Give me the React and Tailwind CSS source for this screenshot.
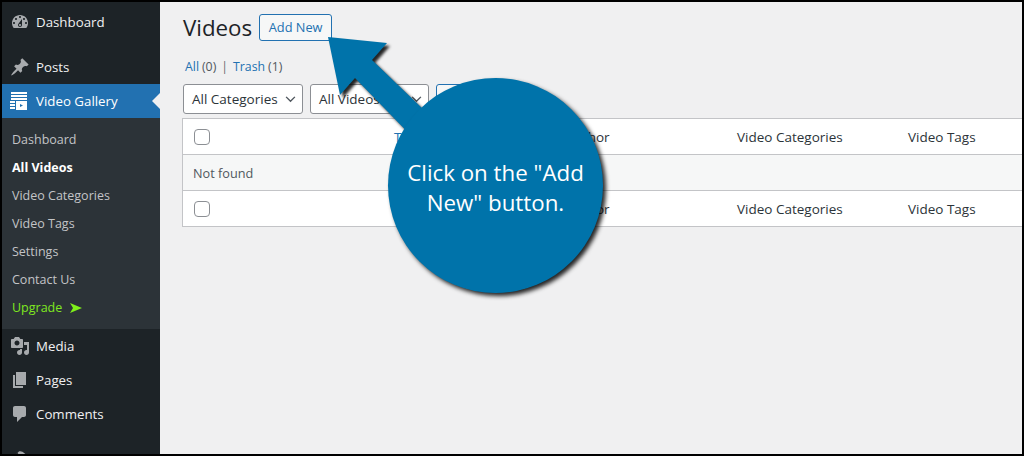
const FONT = "font-['Open_Sans','Noto_Sans',sans-serif]";

const paths = {
  dashboard: "M3.76 16h12.48c1.1-1.37 1.76-3.11 1.76-5 0-4.42-3.58-8-8-8s-8 3.58-8 8c0 1.89.66 3.63 1.76 5zM10 4c.55 0 1 .45 1 1s-.45 1-1 1-1-.45-1-1 .45-1 1-1zM6 6c.55 0 1 .45 1 1s-.45 1-1 1-1-.45-1-1 .45-1 1-1zm8 0c.55 0 1 .45 1 1s-.45 1-1 1-1-.45-1-1 .45-1 1-1zm-5.37 5.55L12 7v6c0 1.1-.9 2-2 2s-2-.9-2-2c0-.57.24-1.08.63-1.45zM4 10c.55 0 1 .45 1 1s-.45 1-1 1-1-.45-1-1 .45-1 1-1zm12 0c.55 0 1 .45 1 1s-.45 1-1 1-1-.45-1-1 .45-1 1-1zm-5 3c0-.55-.45-1-1-1s-1 .45-1 1 .45 1 1 1 1-.45 1-1z",
  pin: "M10.44 3.02l1.82-1.82 6.36 6.35-1.83 1.82c-1.05-.68-2.48-.57-3.41.36l-.75.75c-.92.93-1.04 2.35-.35 3.41l-1.83 1.82-2.41-2.41-2.8 2.79c-.42.42-3.38 2.71-3.8 2.29s1.86-3.39 2.28-3.81l2.79-2.79L4.1 9.36l1.83-1.82c1.05.69 2.48.57 3.4-.36l.75-.75c.93-.92 1.05-2.35.36-3.41z",
  media: "M13 11V4c0-.55-.45-1-1-1h-1.67L9 1H5L3.67 3H2c-.55 0-1 .45-1 1v7c0 .55.45 1 1 1h10c.55 0 1-.45 1-1zM7 4.5c1.38 0 2.5 1.12 2.5 2.5S8.38 9.5 7 9.5 4.5 8.38 4.5 7 5.62 4.5 7 4.5zM14 6h5v10.5c0 1.38-1.12 2.5-2.5 2.5S14 17.88 14 16.5s1.12-2.5 2.5-2.5c.17 0 .34.02.5.05V9h-3V6zm-4 8.05V13h2v3.5c0 1.38-1.12 2.5-2.5 2.5S7 17.88 7 16.5 8.12 14 9.5 14c.17 0 .34.02.5.05z",
  pages: "M6 15V2h10v13H6zm-1 1h8v2H3V5h2v11z",
  comments: "M5 2h9c1.1 0 2 .9 2 2v7c0 1.1-.9 2-2 2h-2l-5 5v-5H5c-1.1 0-2-.9-2-2V4c0-1.1.9-2 2-2z",
  appearance: "M14.48 11.06L7.41 3.99l1.5-1.5c.5-.56 2.3-.47 3.51.32 1.21.8 1.43 1.28 2.91 2.1 1.18.64 2.45 1.26 4.45.85zm-.71.71L6.7 4.7 4.93 6.47c-.39.39-.39 1.02 0 1.41l1.06 1.06c.39.39.39 1.03 0 1.42-.6.6-1.43 1.11-2.21 1.69-.35.26-.7.53-1.01.84C1.43 13.23.78 15.6 2.09 16.9c1.31 1.31 3.68.65 5.03-.69.31-.31.58-.66.84-1.01.58-.78 1.09-1.61 1.69-2.21.39-.39 1.03-.39 1.42 0l1.06 1.06c.39.39 1.02.39 1.41 0z",
};

function DashIcon({ name, className = "" }) {
  return (
    <svg viewBox="0 0 20 20" className={`h-5 w-5 shrink-0 fill-[#a7aaad] ${className}`}>
      <path d={paths[name]} />
    </svg>
  );
}

function GalleryIcon() {
  return (
    <svg viewBox="0 0 18 18" className="h-[18px] w-[18px] shrink-0 fill-white">
      <rect x="1" y="0" width="16" height="2" />
      <rect x="1" y="3" width="16" height="2" />
      <rect x="1" y="6" width="16" height="2" />
      <rect x="0" y="9" width="5" height="2" />
      <rect x="0" y="12" width="5" height="2" />
      <rect x="0" y="15" width="5" height="2" />
      <path fillRule="evenodd" d="M6 9h11v9H6zM10 12v3l3-1.500z" />
    </svg>
  );
}

function MenuRow({ icon, label, className = "" }) {
  return (
    <div className={`flex h-[34px] shrink-0 items-center text-[13.3px] text-[#f0f0f1] ${className}`}>
      <div className="flex w-[34px] shrink-0 justify-center pl-[2px]">{icon}</div>
      <span className="pt-[2px]">{label}</span>
    </div>
  );
}

function SubItem({ children, active }) {
  return (
    <div className={`flex h-7 shrink-0 items-center pl-[10px] pt-[2px] text-[12.5px] ${active ? "font-bold text-white" : "text-[#c3c4c7]"}`}>
      {children}
    </div>
  );
}

function Sidebar() {
  return (
    <aside className="flex h-full w-[158px] shrink-0 flex-col overflow-hidden bg-[#1d2327] pt-[3px]">
      <MenuRow icon={<DashIcon name="dashboard" />} label="Dashboard" className="mb-[11px]" />
      <MenuRow icon={<DashIcon name="pin" />} label="Posts" />
      <div className="relative flex h-[34px] shrink-0 items-center bg-[#2271b1] text-[13.3px] text-white">
        <div className="flex w-[34px] justify-center">
          <GalleryIcon />
        </div>
        <span className="pt-[2px]">Video Gallery</span>
        <span className="absolute right-0 top-[9px] h-0 w-0 border-y-[8px] border-r-[8px] border-y-transparent border-r-[#f0f0f1]" />
      </div>
      <div className="flex h-[211px] shrink-0 flex-col bg-[#2c3338] pt-[7px]">
        <SubItem>Dashboard</SubItem>
        <SubItem active>All Videos</SubItem>
        <SubItem>Video Categories</SubItem>
        <SubItem>Video Tags</SubItem>
        <SubItem>Settings</SubItem>
        <SubItem>Contact Us</SubItem>
        <div className="flex h-7 shrink-0 items-center gap-[8px] pl-[10px] pt-[2px] text-[12.5px] text-[#7fe81f]">
          <span>Upgrade</span>
          <svg viewBox="0 0 12 10" className="h-[10px] w-[12px] fill-[#7ff01a]">
            <path d="M0 0l12 5-12 5 3-5z" />
          </svg>
        </div>
      </div>
      <MenuRow icon={<DashIcon name="media" />} label="Media" />
      <MenuRow icon={<DashIcon name="pages" />} label="Pages" />
      <MenuRow icon={<DashIcon name="comments" />} label="Comments" className="mb-[11px]" />
      <MenuRow icon={<DashIcon name="appearance" />} label="" />
    </aside>
  );
}

function Select({ label, className }) {
  return (
    <div className={`flex h-[30px] items-center justify-between rounded-[3px] border border-[#8c8f94] bg-white pl-2 pr-[6px] text-[13.5px] text-[#2c3338] ${className}`}>
      <span className="whitespace-nowrap">{label}</span>
      <svg viewBox="0 0 12 8" className="h-[7px] w-[11px] fill-none stroke-[#50575e] stroke-[1.6]">
        <path d="M1 1l5 5 5-5" />
      </svg>
    </div>
  );
}

function Check() {
  return <span className="block h-4 w-4 rounded-[4px] border border-[#8c8f94] bg-white" />;
}

function ColumnRow({ last }) {
  return (
    <div className={`grid grid-cols-[200px_172px_171px_171px_1fr] items-center bg-white text-[13.5px] text-[#2c3338] ${last ? "h-[35px]" : "h-9 border-b border-[#c3c4c7]"}`}>
      <div className="pl-[11px]"><Check /></div>
      <div className="pl-[11px] pt-[1px] text-[#2271b1]">Title</div>
      <div className="pl-[11px] pt-[1px]">Author</div>
      <div className="pl-[11px] pt-[1px]">Video Categories</div>
      <div className="pl-[11px] pt-[1px]">Video Tags</div>
    </div>
  );
}

function Main() {
  return (
    <main className="relative h-full min-w-0 flex-1 overflow-hidden bg-[#f0f0f1] pl-[22px] pt-[12px]">
      <div className="flex h-[27px] items-center pl-[1px]">
        <h1 className="text-[22.3px] font-normal text-[#1d2327]">Videos</h1>
        <button className="ml-[7px] h-[27px] w-[73px] rounded-[3px] border border-[#2271b1] bg-[#f6f7f7] pt-[1px] text-[12.8px] font-medium text-[#2271b1]">
          Add New
        </button>
      </div>
      <div className="mt-[14px] flex h-[24px] items-center pl-[3px] text-[12.3px]">
        <span className="text-[#2271b1]">All</span>
        <span className="ml-[3px] text-[#50575e]">(0)</span>
        <span className="mx-[5px] text-[#646970]">|</span>
        <span className="text-[#2271b1]">Trash</span>
        <span className="ml-[3px] text-[#50575e]">(1)</span>
      </div>
      <div className="mt-[5px] flex gap-[7px] pl-[1px]">
        <Select label="All Categories" className="w-[120px]" />
        <Select label="All Videos" className="w-[119px]" />
        <div className="h-[30px] w-[60px] rounded-[3px] border border-[#2271b1] bg-[#f6f7f7]" />
      </div>
      <div className="mt-[4px] w-[844px] border border-[#c3c4c7]">
        <ColumnRow />
        <div className="flex h-9 items-center border-b border-[#c3c4c7] bg-[#f6f7f7] pl-[10px] pt-[3px] text-[12.7px] text-[#50575e]">
          Not found
        </div>
        <ColumnRow last />
      </div>
    </main>
  );
}

function Callout() {
  return (
    <>
      <svg className="absolute left-0 top-0 h-[456px] w-[1024px]" viewBox="0 0 1024 456">
        <defs>
          <filter id="sh" x="-20%" y="-20%" width="140%" height="140%">
            <feGaussianBlur stdDeviation="1.600" />
          </filter>
        </defs>
        <path d="M328 37L387 43L372 60L450 135L425 150L355 78L340 95Z" transform="translate(3 3)" fill="#000" fillOpacity="0.85" filter="url(#sh)" />
        <path d="M328 37L387 43L372 60L450 135L425 150L355 78L340 95Z" fill="#0073aa" />
      </svg>
      <div className="absolute left-[388px] top-[78px] flex h-[215px] w-[215px] items-center justify-center rounded-full bg-[#0073aa] pt-[5px] text-center text-[22.3px] leading-[30px] text-white shadow-[3px_3px_4px_rgba(0,0,0,0.85)]">
        <span className="w-[190px]">Click on the "Add New" button.</span>
      </div>
    </>
  );
}

export default function App() {
  return (
    <div className={`relative h-[456px] w-[1024px] overflow-hidden ${FONT}`}>
      <div className="flex h-full w-full border-2 border-black">
        <Sidebar />
        <Main />
      </div>
      <Callout />
    </div>
  );
}
